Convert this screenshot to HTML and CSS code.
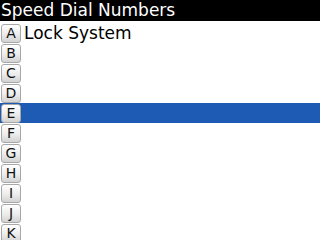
FILE: index.html
```html
<!DOCTYPE html>
<html>
<head>
<meta charset="utf-8">
<link rel="stylesheet" href="styles.css">
</head>
<body>
<div class="title">Speed Dial Numbers</div>
<ul class="list">
  <li class="row"><span class="key">A</span><span class="label">Lock System</span></li>
  <li class="row"><span class="key">B</span></li>
  <li class="row"><span class="key">C</span></li>
  <li class="row"><span class="key">D</span></li>
  <li class="row selected"><span class="key">E</span></li>
  <li class="row"><span class="key">F</span></li>
  <li class="row"><span class="key">G</span></li>
  <li class="row"><span class="key">H</span></li>
  <li class="row"><span class="key">I</span></li>
  <li class="row"><span class="key">J</span></li>
  <li class="row"><span class="key">K</span></li>
</ul>
</body>
</html>
```
FILE: styles.css
```css
html, body {
  margin: 0;
  padding: 0;
  background: #fff;
  width: 320px;
  height: 240px;
  overflow: hidden;
  font-family: "DejaVu Sans", sans-serif;
}
.title {
  height: 21px;
  background: #000;
  color: #fff;
  font-size: 17px;
  line-height: 21px;
  padding-left: 1px;
  margin-bottom: 2px;
  white-space: nowrap;
}
.list {
  list-style: none;
  margin: 0;
  padding: 0;
}
.row {
  height: 20px;
  display: flex;
  align-items: center;
  gap: 3px;
}
.row.selected {
  background: #1d5bb5;
}
.key {
  width: 20px;
  height: 19px;
  margin-left: 1px;
  box-sizing: border-box;
  border: 1px solid #a8a8a8;
  border-radius: 3px;
  background: linear-gradient(#ffffff, #ececec 55%, #d2d2d2);
  color: #111;
  font-size: 14px;
  display: flex;
  align-items: center;
  justify-content: center;
  line-height: 1;
}
.label {
  font-size: 17px;
  color: #000;
  line-height: 20px;
}
```
